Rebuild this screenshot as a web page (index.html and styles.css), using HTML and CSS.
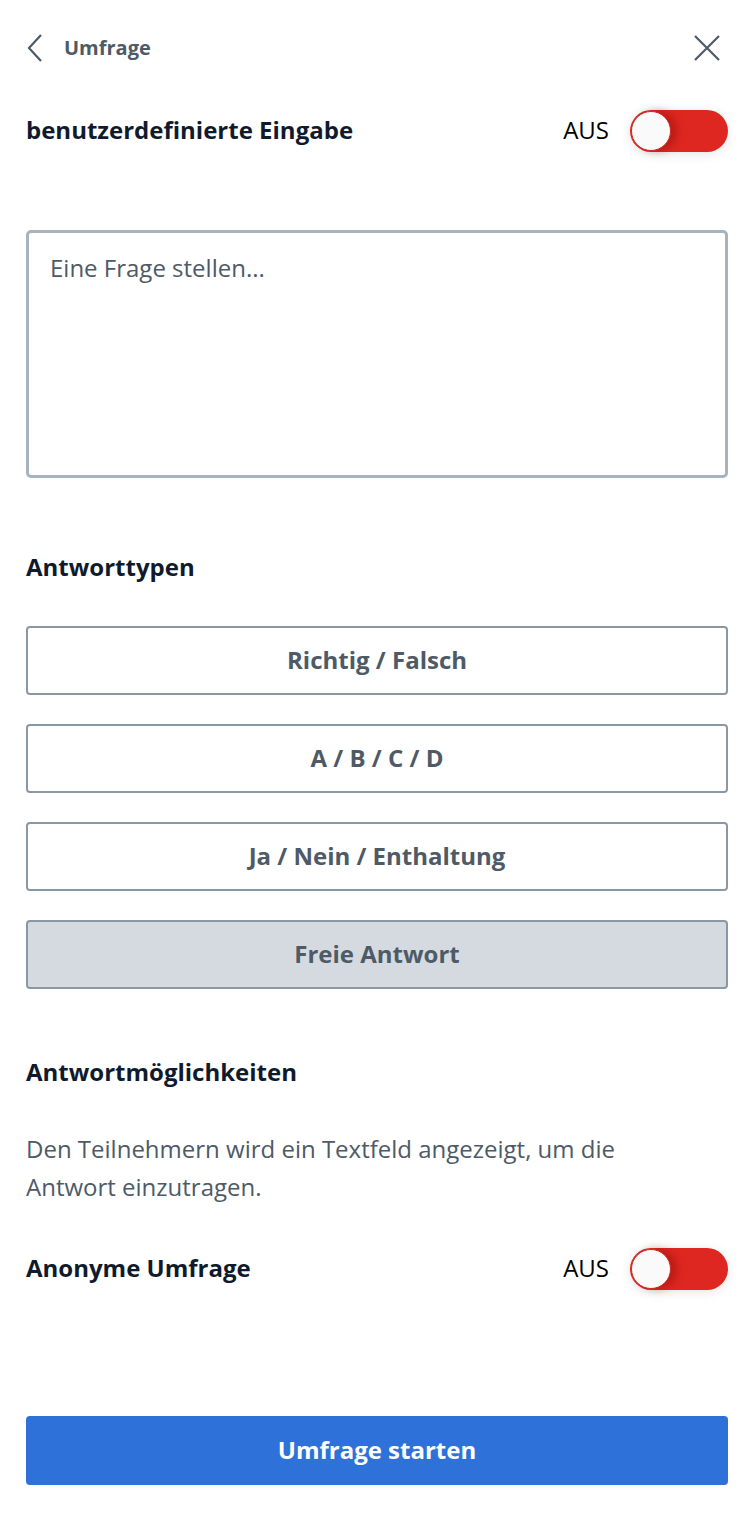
FILE: index.html
```html
<!DOCTYPE html>
<html lang="de">
<head>
    <meta charset="UTF-8">
    <meta name="viewport" content="width=device-width, initial-scale=1.0">
    <title>Umfrage</title>
    <link rel="stylesheet" href="styles.css">
</head>
<body>
    <div class="panel">
        <header class="header">
            <button class="back" type="button">
                <svg width="16" height="28" viewBox="0 0 16 28"><path d="M14 1 L2 14 L14 27" fill="none" stroke="#4e5a66" stroke-width="2.2"/></svg>
                <span>Umfrage</span>
            </button>
            <button class="close" type="button">
                <svg width="26" height="26" viewBox="0 0 26 26"><path d="M1 1 L25 25 M25 1 L1 25" fill="none" stroke="#4e5a66" stroke-width="2.2"/></svg>
            </button>
        </header>

        <div class="row custom-row">
            <h2 class="label">benutzerdefinierte Eingabe</h2>
            <div class="switch-wrap">
                <span class="switch-text">AUS</span>
                <span class="switch"><span class="knob"></span></span>
            </div>
        </div>

        <textarea class="question" placeholder="Eine Frage stellen..."></textarea>

        <h2 class="label types-title">Antworttypen</h2>
        <div class="types">
            <button class="type" type="button">Richtig / Falsch</button>
            <button class="type" type="button">A / B / C / D</button>
            <button class="type" type="button">Ja / Nein / Enthaltung</button>
            <button class="type selected" type="button">Freie Antwort</button>
        </div>

        <h2 class="label options-title">Antwortmöglichkeiten</h2>
        <p class="hint">Den Teilnehmern wird ein Textfeld angezeigt, um die Antwort einzutragen.</p>

        <div class="row anon-row">
            <h2 class="label">Anonyme Umfrage</h2>
            <div class="switch-wrap">
                <span class="switch-text">AUS</span>
                <span class="switch"><span class="knob"></span></span>
            </div>
        </div>

        <button class="start" type="button">Umfrage starten</button>
    </div>
</body>
</html>
```

FILE: styles.css
```css
body {
    margin: 0;
    background-color: #fff;
    font-family: "Open Sans", Lato, sans-serif;
    color: #0f1b2d;
}
.panel {
    width: 702px;
    padding: 0 24px 0 26px;
}
button {
    font-family: inherit;
    cursor: pointer;
}
.header {
    height: 96px;
    display: flex;
    align-items: center;
    justify-content: space-between;
}
.back, .close {
    background: none;
    border: none;
    padding: 0;
    display: flex;
    align-items: center;
}
.back svg {
    margin-left: 1px;
}
.back span {
    margin-left: 21px;
    padding-bottom: 2px;
    font-size: 20px;
    font-weight: 700;
    color: #4e5a66;
}
.close {
    margin-right: 8px;
}
.row {
    display: flex;
    align-items: center;
    justify-content: space-between;
}
.row .label, .switch-text {
    padding-bottom: 4px;
}
.custom-row {
    height: 70px;
}
.label {
    margin: 0;
    font-size: 24px;
    font-weight: 700;
    color: #0f1b2d;
}
.switch-wrap {
    display: flex;
    align-items: center;
}
.switch-text {
    font-size: 24px;
    color: #000;
    margin-right: 21px;
}
.switch {
    width: 98px;
    height: 42px;
    border-radius: 21px;
    background-color: #de2721;
    display: flex;
    align-items: center;
    box-shadow: 0 2px 12px rgba(0, 0, 0, 0.1);
}
.knob {
    width: 38px;
    height: 38px;
    margin-left: 1px;
    border-radius: 50%;
    background-color: #fafafa;
    border: 1px solid #d02a24;
    box-shadow: 6px 0 8px rgba(120, 0, 0, 0.35);
}
.question {
    display: block;
    box-sizing: border-box;
    width: 702px;
    height: 248px;
    margin-top: 64px;
    padding: 18px 21px;
    border: 3px solid #a7b3bd;
    border-radius: 5px;
    resize: none;
    font-family: inherit;
    font-size: 24px;
    color: #4e5a66;
}
.question::placeholder {
    color: #4e5a66;
}
.types-title {
    margin-top: 72px;
}
.types {
    display: flex;
    flex-direction: column;
    gap: 29px;
    margin-top: 43px;
}
.type {
    height: 69px;
    background-color: #fff;
    border: 2px solid #8a98a6;
    border-radius: 4px;
    padding-bottom: 3px;
    font-size: 24px;
    font-weight: 700;
    color: #4e5a66;
}
.type.selected {
    background-color: #d5dae1;
}
.options-title {
    margin-top: 66px;
}
.hint {
    margin: 42px 0 0;
    font-size: 24px;
    line-height: 38px;
    color: #4e5a66;
    padding-right: 60px;
}
.anon-row {
    margin-top: 42px;
}
.start {
    display: block;
    width: 702px;
    height: 69px;
    margin-top: 126px;
    border: none;
    border-radius: 4px;
    padding-bottom: 3px;
    background-color: #2d71d9;
    color: #fff;
    font-size: 24px;
    font-weight: 700;
}
```
